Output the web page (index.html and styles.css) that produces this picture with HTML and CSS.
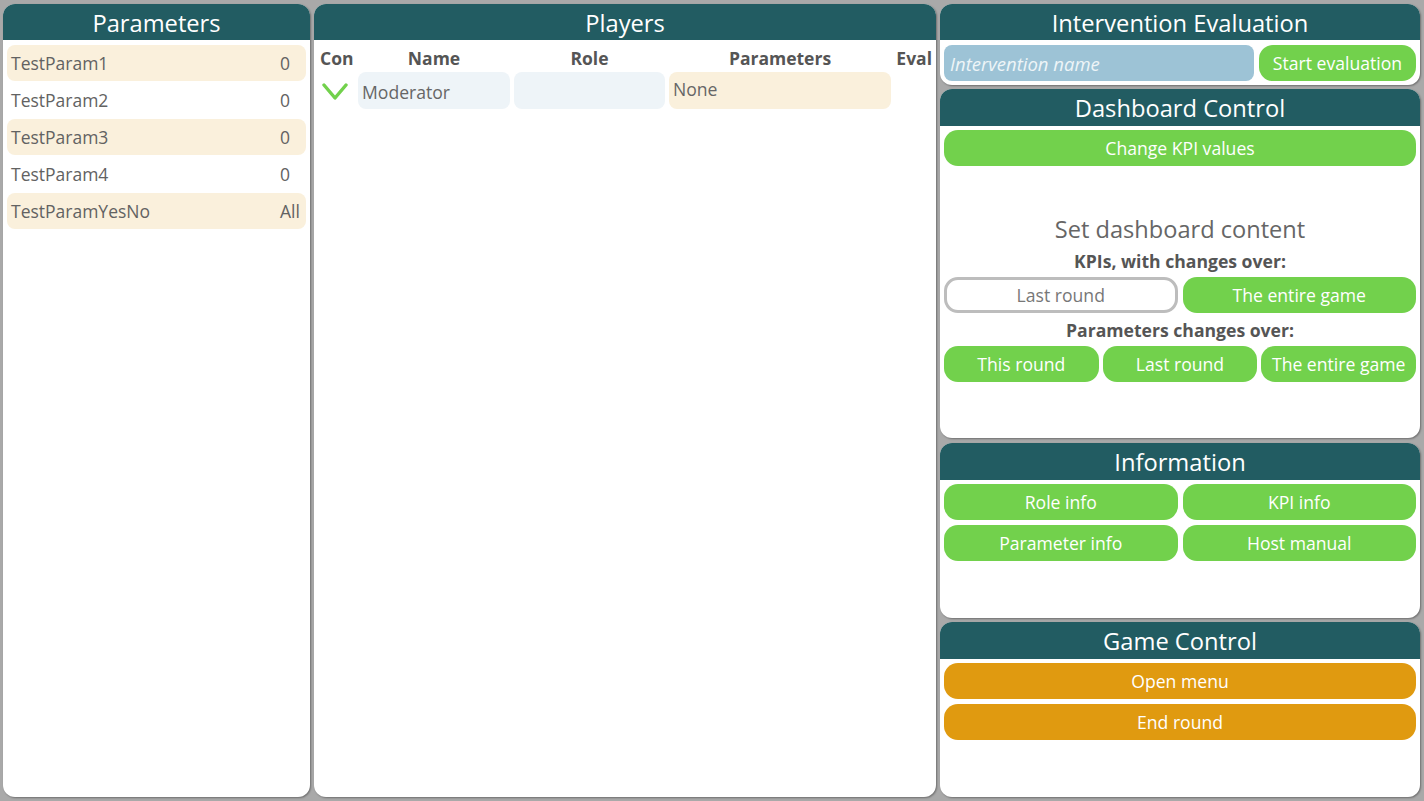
FILE: index.html
```html
<!DOCTYPE html>
<html>
<head>
<meta charset="utf-8">
<link rel="stylesheet" href="styles.css">
</head>
<body>
<div class="app">
  <section class="panel params">
    <h2 class="ph">Parameters</h2>
    <div class="plist">
      <div class="prow alt"><span class="pname">TestParam1</span><span class="pval">0</span></div>
      <div class="prow"><span class="pname">TestParam2</span><span class="pval">0</span></div>
      <div class="prow alt"><span class="pname">TestParam3</span><span class="pval">0</span></div>
      <div class="prow"><span class="pname">TestParam4</span><span class="pval">0</span></div>
      <div class="prow alt"><span class="pname">TestParamYesNo</span><span class="pval">All</span></div>
    </div>
  </section>

  <section class="panel players">
    <h2 class="ph">Players</h2>
    <div class="ptable">
      <div class="thead">
        <span class="c-con">Con</span>
        <span class="c-name">Name</span>
        <span class="c-role">Role</span>
        <span class="c-par">Parameters</span>
        <span class="c-eval">Eval</span>
      </div>
      <div class="trow">
        <span class="c-con check"><svg width="26" height="20" viewBox="0 0 26 20"><path d="M2 3 L13 16 L24 3" fill="none" stroke="#72d14c" stroke-width="3.4" stroke-linecap="round" stroke-linejoin="round"/></svg></span>
        <span class="c-name cell blue">Moderator</span>
        <span class="c-role cell blue"></span>
        <span class="c-par cell beige none">None</span>
        <span class="c-eval"></span>
      </div>
    </div>
  </section>

  <div class="rightcol">
    <section class="panel ie">
      <h2 class="ph">Intervention Evaluation</h2>
      <div class="ierow">
        <div class="iname">Intervention name</div>
        <button class="btn green startbtn">Start evaluation</button>
      </div>
    </section>

    <section class="panel dc">
      <h2 class="ph tall">Dashboard Control</h2>
      <div class="body">
        <button class="btn green full">Change KPI values</button>
        <div class="sdc">Set dashboard content</div>
        <div class="sub">KPIs, with changes over:</div>
        <div class="grid2">
          <button class="btn outline">Last round</button>
          <button class="btn green">The entire game</button>
        </div>
        <div class="sub sub2">Parameters changes over:</div>
        <div class="grid3">
          <button class="btn green">This round</button>
          <button class="btn green">Last round</button>
          <button class="btn green">The entire game</button>
        </div>
      </div>
    </section>

    <section class="panel info">
      <h2 class="ph tall">Information</h2>
      <div class="body grid2 gridinfo">
        <button class="btn green">Role info</button>
        <button class="btn green">KPI info</button>
        <button class="btn green">Parameter info</button>
        <button class="btn green">Host manual</button>
      </div>
    </section>

    <section class="panel gc">
      <h2 class="ph tall">Game Control</h2>
      <div class="body stack">
        <button class="btn orange full">Open menu</button>
        <button class="btn orange full">End round</button>
      </div>
    </section>
  </div>
</div>
</body>
</html>
```

FILE: styles.css
```css
* { box-sizing: border-box; }
html, body { margin: 0; height: 100%; }
body {
  background: #a9a9a9;
  font-family: "Open Sans", "Noto Sans", sans-serif;
  color: #555;
}
.app {
  display: grid;
  grid-template-columns: 307px 622px 480px;
  column-gap: 4px;
  padding: 4px 4px 4px 3px;
  height: 801px;
}
.panel {
  background: #fff;
  border-radius: 12px;
  overflow: hidden;
  box-shadow: 1px 1px 2px rgba(0,0,0,0.35);
  display: flex;
  flex-direction: column;
}
.ph {
  margin: 0;
  height: 36px;
  flex: none;
  background: #225c62;
  color: #fff;
  font-weight: 400;
  font-size: 23.7px;
  line-height: 38px;
  text-align: center;
}
.ph.tall { height: 37px; line-height: 39px; }
/* parameters */
.plist { padding: 5px 4px 0 4px; display: flex; flex-direction: column; gap: 1px; }
.prow {
  height: 36px;
  border-radius: 8px;
  display: flex;
  align-items: center;
  padding-left: 4px;
  font-size: 17.5px;
  color: #626262;
}
.prow.alt { background: #faf0dc; }
.pname { flex: 1; }
.pval { width: 26px; }

/* players */
.ptable { padding: 0 4px 0 4px; }
.thead, .trow {
  display: grid;
  grid-template-columns: 36px 152px 151px 222px 1fr;
  column-gap: 4px;
}
.thead {
  height: 32px;
  align-items: center;
  font-weight: 700;
  font-size: 17.5px;
  color: #555;
  text-align: center;
  padding-top: 3px;
}
.thead .c-con { text-align: left; padding-left: 2px; }
.thead .c-eval { text-align: right; }
.trow { height: 37px; }
.cell {
  border-radius: 8px;
  font-size: 17.6px;
  color: #666;
  display: flex;
  align-items: center;
  padding-left: 4px;
  padding-top: 2px;
}
.cell.blue { background: #eef4f8; }
.cell.beige { background: #faf0dc; }
.cell.none { padding-top: 0; padding-bottom: 3px; }
.check { display: flex; align-items: center; padding-left: 4px; padding-top: 2px; }

/* right column */
.rightcol {
  display: grid;
  grid-template-rows: 81px 349px 175px 175px;
  row-gap: 4.4px;
  min-height: 0;
}
.rightcol .panel { min-height: 0; }
.ierow { display: flex; gap: 5px; padding: 5px 4px 0 4px; }
.iname {
  flex: 1;
  height: 36px;
  border-radius: 8px;
  background: #9dc3d6;
  color: #eef5f8;
  font-style: italic;
  font-size: 18.5px;
  padding-left: 6px;
  display: flex;
  align-items: center;
}
.btn {
  height: 36px;
  border: none;
  border-radius: 14px;
  font-family: inherit;
  font-size: 17.6px;
  color: #fff;
  padding: 0;
  margin: 0;
}
.green { background: #72d14c; }
.orange { background: #e09a10; }
.startbtn { width: 157px; }
.outline {
  background: #fff;
  border: 3px solid #bdbdbd;
  color: #777;
}
.body { padding: 4px 4px 0 4px; }
.full { width: 100%; display: block; }
.sdc {
  margin-top: 47px;
  text-align: center;
  font-size: 23.6px;
  color: #666;
  line-height: 32px;
}
.sub {
  text-align: center;
  font-weight: 700;
  font-size: 17.6px;
  color: #555;
  line-height: 24px;
  margin-top: 4px;
  margin-bottom: 4px;
}
.sub2 { margin-top: 5px; margin-bottom: 4px; }
.grid2 { display: grid; grid-template-columns: 1fr 1fr; column-gap: 5px; row-gap: 5px; }
.grid3 { display: grid; grid-template-columns: 1fr 1fr 1fr; column-gap: 4px; }
.gridinfo { align-content: start; }
.stack { display: flex; flex-direction: column; gap: 5px; }
```
